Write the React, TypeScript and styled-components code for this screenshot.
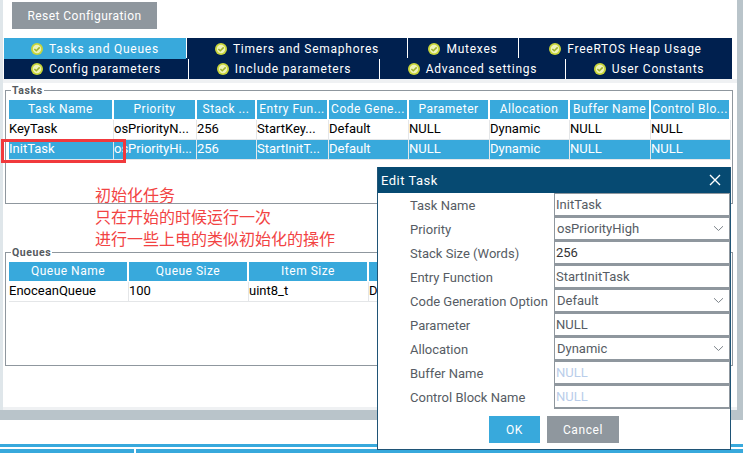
import React from "react";
import styled, { createGlobalStyle } from "styled-components";

const Global = createGlobalStyle`
  html, body { margin: 0; padding: 0; background: #fff; }
  * { box-sizing: border-box; }
`;

const UI = `"Roboto", "Liberation Sans", "Noto Sans CJK SC", sans-serif`;

const Page = styled.div`
  position: relative;
  width: 743px;
  height: 453px;
  overflow: hidden;
  background: #fff;
  font-family: ${UI};
  font-size: 13px;
  display: flex;
  flex-direction: column;
`;
const Workspace = styled.div`
  height: 410px;
  display: flex;
  padding-left: 1px;
  background: #dfe6ea;
`;
const Main = styled.div`
  width: 734px;
  background: #fff;
  margin-left: 2px;
  display: flex;
  flex-direction: column;
  border-bottom: 3px solid #eff1f3;
`;
const Rail = styled.div`
  flex: 1;
  background: #b9c4ca;
`;
const BottomBand = styled.div`
  height: 10px;
  background: #b9c4ca;
`;
const FooterGap = styled.div`
  height: 24px;
`;
const FooterLine = styled.div`
  height: 3px;
  background: #38a9dc;
`;
const FooterCells = styled.div`
  margin-top: 2px;
  height: 4px;
  display: grid;
  grid-template-columns: 134px 1fr;
  column-gap: 2px;
`;
const FooterCell = styled.div`
  background: #38a9dc;
`;
const Toolbar = styled.div`
  height: 38px;
  padding: 2px 0 0 9px;
`;
const ResetButton = styled.button`
  width: 145px;
  height: 27px;
  border: 0;
  background: #8f979e;
  color: #fff;
  font: 12px ${UI};
  letter-spacing: 0.45px;
  padding: 0;
`;
const TabRow = styled.div<{ $cols: string; $h: number }>`
  display: grid;
  grid-template-columns: ${(p) => p.$cols};
  column-gap: 1px;
  height: ${(p) => p.$h}px;
  margin-left: 1px;
  width: 728px;
  margin-bottom: 1px;
  flex: none;
`;
const Tab = styled.div<{ $active?: boolean }>`
  position: relative;
  z-index: ${(p) => (p.$active ? 1 : 0)};
  height: ${(p) => (p.$active ? "21px" : "100%")};
  background: ${(p) => (p.$active ? "#38a9dc" : "#00204f")};
  color: #fff;
  font-size: 12px;
  letter-spacing: 0.75px;
  display: flex;
  align-items: center;
  justify-content: center;
  gap: 6px;
`;
const TabBand = styled.div`
  height: 4px;
  background: #eff1f3;
  margin-top: -1px;
  flex: none;
`;
const Sets = styled.div`
  flex: 1;
  display: flex;
  flex-direction: column;
  padding: 7px 0 0 2px;
  width: 730px;
`;
const GroupBox = styled.fieldset<{ $h: number; $after: number }>`
  margin: 0 0 ${(p) => p.$after}px;
  padding: 0 3px;
  height: ${(p) => p.$h}px;
  border: 1px solid #8f979e;
  min-width: 0;
  flex: none;
  position: relative;
`;
const GroupTitle = styled.legend`
  position: absolute;
  left: 5px;
  top: -6px;
  background: #fff;
  padding: 0 1px;
  color: #555a60;
  font-size: 10.5px;
  font-weight: 700;
  letter-spacing: 0.6px;
  line-height: 12px;
`;
const Grid = styled.div<{ $cols: string }>`
  display: grid;
  grid-template-columns: ${(p) => p.$cols};
  column-gap: 1px;
  row-gap: 0;
  padding-top: 9px;
  background: #fff;
`;
const Head = styled.div`
  height: 19px;
  margin-right: 1px;
  margin-bottom: 1px;
  background: #38a9dc;
  color: #fff;
  font-size: 12px;
  letter-spacing: 0.5px;
  line-height: 19px;
  text-align: center;
  white-space: nowrap;
  overflow: hidden;
`;
const Cell = styled.div<{ $sel?: boolean }>`
  height: 20px;
  border-right: 1px solid #e4e6e8;
  border-bottom: 1px solid #e4e6e8;
  margin-right: -1px;
  background: ${(p) => (p.$sel ? "#38a9dc" : "#fff")};
  color: ${(p) => (p.$sel ? "#fff" : "#000")};
  font-size: 13px;
  line-height: 18px;
  white-space: nowrap;
  overflow: hidden;
`;
const RedFrame = styled.div`
  position: absolute;
  left: 1px;
  top: 139px;
  width: 125px;
  height: 24px;
  border: 3px solid #f1393c;
`;
const Note = styled.div`
  position: absolute;
  left: 95px;
  top: 183px;
  color: #f24343;
  font: 16px/22px "Noto Sans CJK SC", sans-serif;
`;
const Dialog = styled.div`
  position: absolute;
  left: 377px;
  top: 167px;
  width: 354px;
  height: 283px;
  background: #fff;
  border: 1px solid #1f5476;
  border-top: 0;
`;
const DialogTitle = styled.div`
  height: 26px;
  background: #064a72;
  color: #fff;
  font-size: 13px;
  letter-spacing: 0.5px;
  display: flex;
  align-items: center;
  justify-content: space-between;
  padding: 0 9px 0 3px;
`;
const FormGrid = styled.div`
  display: grid;
  grid-template-columns: 176px 176px;
  grid-auto-rows: 24px;
`;
const FieldLabel = styled.div`
  padding: 1px 0 0 32px;
  color: #565c64;
  font-size: 13px;
  line-height: 24px;
  white-space: nowrap;
`;
const Field = styled.div<{ $dim?: boolean; $dark?: boolean; $select?: boolean }>`
  height: 24px;
  border: 1px solid #8f979e;
  border-bottom-width: 2px;
  background: #fff;
  padding: 0 5px 0 ${(p) => (p.$select ? "2px" : "1px")};
  color: ${(p) => (p.$dim ? "#b9cdea" : p.$dark ? "#333" : "#565c64")};
  font-size: 13px;
  line-height: 20px;
  display: flex;
  align-items: center;
  justify-content: space-between;
`;
const Actions = styled.div`
  display: flex;
  gap: 7px;
  padding: 7px 0 0 111px;
`;
const DialogButton = styled.button<{ $primary?: boolean }>`
  width: ${(p) => (p.$primary ? "51px" : "72px")};
  height: 27px;
  border: 0;
  padding: 0;
  background: ${(p) => (p.$primary ? "#38a9dc" : "#8f979e")};
  color: #fff;
  font: 12px ${UI};
  letter-spacing: 0.6px;
`;

const Check = () => (
  <svg width="12" height="12" viewBox="0 0 12 12">
    <circle cx="6" cy="6" r="6" fill="#c8d53a" />
    <circle cx="6" cy="6" r="4.2" fill="#eef3b8" />
    <path d="M3.4 6 5.3 7.8 8.7 4.4" fill="none" stroke="#9fb12a" strokeWidth="1.5" />
  </svg>
);
const Chevron = () => (
  <svg width="11" height="7" viewBox="0 0 11 7">
    <path d="M1 1.2 5.5 5.5 10 1.2" fill="none" stroke="#7d848b" strokeWidth="1" />
  </svg>
);
const Close = () => (
  <svg width="12" height="12" viewBox="0 0 12 12">
    <path d="M1 1 11 11M11 1 1 11" stroke="#fff" strokeWidth="1.4" />
  </svg>
);

const topTabs = [
  ["Tasks and Queues", true],
  ["Timers and Semaphores"],
  ["Mutexes"],
  ["FreeRTOS Heap Usage"],
] as const;
const lowTabs = ["Config parameters", "Include parameters", "Advanced settings", "User Constants"];

const taskCols = "104px 82px 59px 71px 79px 80px 79px 80px 79px";
const taskHead = ["Task Name", "Priority", "Stack ...", "Entry Fun...", "Code Gene...", "Parameter", "Allocation", "Buffer Name", "Control Blo..."];
const taskRows = [
  ["KeyTask", "osPriorityN...", "256", "StartKey...", "Default", "NULL", "Dynamic", "NULL", "NULL"],
  ["InitTask", "osPriorityHi...", "256", "StartInitT...", "Default", "NULL", "Dynamic", "NULL", "NULL"],
];
const queueCols = "119px 119px 119px 9px";
const queueHead = ["Queue Name", "Queue Size", "Item Size", ""];
const queueRow = ["EnoceanQueue", "100", "uint8_t", "Dynamic"];

const form: [string, string, ("select" | "dim" | "dark")?][] = [
  ["Task Name", "InitTask"],
  ["Priority", "osPriorityHigh", "select"],
  ["Stack Size (Words)", "256", "dark"],
  ["Entry Function", "StartInitTask"],
  ["Code Generation Option", "Default", "select"],
  ["Parameter", "NULL"],
  ["Allocation", "Dynamic", "select"],
  ["Buffer Name", "NULL", "dim"],
  ["Control Block Name", "NULL", "dim"],
];

export default function App() {
  return (
    <Page>
      <Global />
      <Workspace>
        <Main>
          <Toolbar>
            <ResetButton>Reset Configuration</ResetButton>
          </Toolbar>
          <TabRow $cols="182px 220px 110px 1fr" $h={19}>
            {topTabs.map((t, i) => (
              <Tab key={i} $active={!!t[1]}>
                <Check />
                {t[0]}
              </Tab>
            ))}
          </TabRow>
          <TabRow $cols="184px 190px 185px 1fr" $h={21}>
            {lowTabs.map((t) => (
              <Tab key={t}>
                <Check />
                {t}
              </Tab>
            ))}
          </TabRow>
          <TabBand />
          <Sets>
            <GroupBox $h={114} $after={48}>
              <GroupTitle>Tasks</GroupTitle>
              <Grid $cols={taskCols}>
                {taskHead.map((h) => (
                  <Head key={h}>{h}</Head>
                ))}
                {taskRows.map((r, ri) =>
                  r.map((c, i) => (
                    <Cell key={ri + "-" + i} $sel={ri === 1}>
                      {c}
                    </Cell>
                  ))
                )}
              </Grid>
            </GroupBox>
            <GroupBox $h={114} $after={0}>
              <GroupTitle>Queues</GroupTitle>
              <Grid $cols={queueCols}>
                {queueHead.map((h, i) => (
                  <Head key={i}>{h}</Head>
                ))}
                {queueRow.map((c) => (
                  <Cell key={c}>{c}</Cell>
                ))}
              </Grid>
            </GroupBox>
          </Sets>
        </Main>
        <Rail />
      </Workspace>
      <BottomBand />
      <FooterGap />
      <FooterLine />
      <FooterCells>
        <FooterCell />
        <FooterCell />
      </FooterCells>

      <RedFrame />
      <Note>
        初始化任务
        <br />
        只在开始的时候运行一次
        <br />
        进行一些上电的类似初始化的操作
      </Note>
      <Dialog>
        <DialogTitle>
          Edit Task
          <Close />
        </DialogTitle>
        <FormGrid>
          {form.map(([label, value, kind]) => (
            <React.Fragment key={label}>
              <FieldLabel>{label}</FieldLabel>
              <Field $dim={kind === "dim"} $dark={kind === "dark"} $select={kind === "select"}>
                {value}
                {kind === "select" && <Chevron />}
              </Field>
            </React.Fragment>
          ))}
        </FormGrid>
        <Actions>
          <DialogButton $primary>OK</DialogButton>
          <DialogButton>Cancel</DialogButton>
        </Actions>
      </Dialog>
    </Page>
  );
}
